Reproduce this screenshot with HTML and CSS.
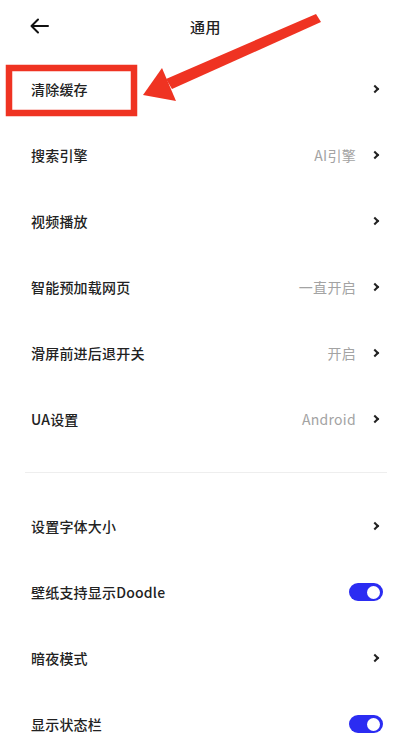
FILE: index.html
```html
<!DOCTYPE html>
<html lang="zh-CN">
<head>
<meta charset="utf-8">
<title>通用</title>
<link rel="stylesheet" href="styles.css">
</head>
<body>
<div class="page">
  <header class="topbar">
    <span class="back">
      <svg width="20" height="16" viewBox="0 0 20 16"><path d="M19 8H2.5M9 1.5L2.5 8L9 14.5" fill="none" stroke="#111" stroke-width="2" stroke-linecap="round" stroke-linejoin="round"/></svg>
    </span>
    <h1 class="title">通用</h1>
  </header>

  <section class="group">
    <div class="row"><span class="label">清除缓存</span><span class="chev"></span></div>
    <div class="row"><span class="label">搜索引擎</span><span class="value">AI引擎</span><span class="chev"></span></div>
    <div class="row"><span class="label">视频播放</span><span class="chev"></span></div>
    <div class="row"><span class="label">智能预加载网页</span><span class="value">一直开启</span><span class="chev"></span></div>
    <div class="row"><span class="label">滑屏前进后退开关</span><span class="value">开启</span><span class="chev"></span></div>
    <div class="row"><span class="label">UA设置</span><span class="value">Android</span><span class="chev"></span></div>
  </section>

  <hr class="divider">

  <section class="group">
    <div class="row"><span class="label">设置字体大小</span><span class="chev"></span></div>
    <div class="row"><span class="label">壁纸支持显示Doodle</span><span class="toggle on"></span></div>
    <div class="row"><span class="label">暗夜模式</span><span class="chev"></span></div>
    <div class="row"><span class="label">显示状态栏</span><span class="toggle on"></span></div>
  </section>

  <svg class="annotation" width="396" height="130" viewBox="0 0 396 130">
    <rect x="9" y="68" width="125" height="45" fill="none" stroke="#ef3322" stroke-width="6.5"/>
    <polygon points="316,14 321,22 172,89 166,79" fill="#ef3322"/>
    <polygon points="143,95 162,68 176,101" fill="#ef3322"/>
  </svg>
</div>
</body>
</html>
```

FILE: styles.css
```css
* { box-sizing: border-box; }
html, body { margin: 0; padding: 0; background: #fff; }
body {
  font-family: "Noto Sans CJK SC", "Noto Sans", sans-serif;
  color: #222;
  width: 396px;
  height: 747px;
  overflow: hidden;
}
.page { position: relative; width: 396px; }
.topbar {
  height: 56px;
  display: flex;
  align-items: center;
  padding: 0 0 4px 29px;
}
.back { width: 20px; height: 16px; display: flex; }
.back svg { display: block; }
.title {
  margin: 0 0 0 141px;
  font-size: 15px;
  font-weight: 500;
  color: #222;
  letter-spacing: 0.5px;
}
.group { display: flex; flex-direction: column; }
.row {
  height: 66px;
  display: flex;
  align-items: center;
  padding: 0 14px 0 31px;
}
.label {
  flex: 1;
  font-size: 14px;
  font-weight: 500;
  color: #222;
  letter-spacing: 0.2px;
}
.value {
  font-size: 14px;
  color: #a3a3a3;
  margin-right: 16px;
  letter-spacing: 0.3px;
}
.chev {
  width: 6px;
  height: 6px;
  border-right: 2px solid #222;
  border-top: 2px solid #222;
  transform: rotate(45deg);
  margin-right: 4px;
}
.divider {
  border: 0;
  border-top: 1px solid #eeeeee;
  margin: 20px 9px 20px 25px;
  height: 0;
}
.toggle {
  width: 34px;
  height: 18px;
  border-radius: 9px;
  background: #2b2cf2;
  position: relative;
  margin-right: -1px;
}
.toggle::after {
  content: "";
  position: absolute;
  right: 3px;
  top: 2.5px;
  width: 13px;
  height: 13px;
  border-radius: 50%;
  background: #fff;
}
.annotation {
  position: absolute;
  left: 0;
  top: 0;
  pointer-events: none;
}
```
